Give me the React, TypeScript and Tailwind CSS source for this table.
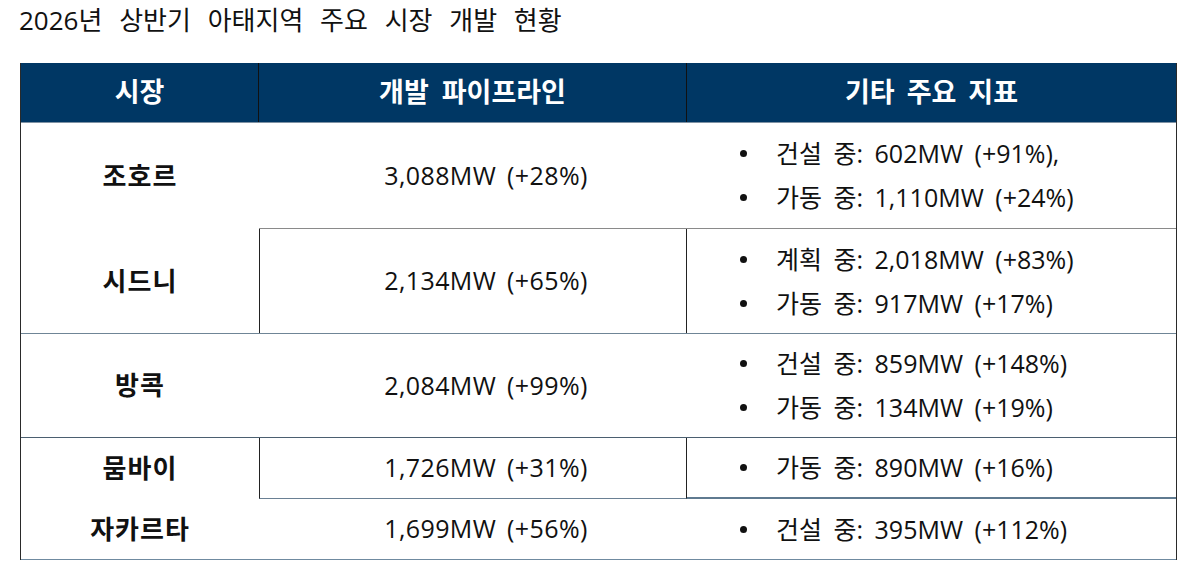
import React from "react";

const font = { fontFamily: '"Open Sans", "Noto Sans CJK KR", sans-serif' };

function Bullets({ items }: { items: string[] }) {
  return (
    <div className="flex flex-col gap-[10px] pl-[53px]">
      {items.map((t) => (
        <div key={t} className="flex items-center h-[34px]">
          <span className="w-[7px] h-[7px] rounded-full bg-[#111] mr-[29px] shrink-0" />
          <span className="text-[25px] leading-none [word-spacing:5px]">{t}</span>
        </div>
      ))}
    </div>
  );
}

export default function App() {
  const name = "w-[238px] shrink-0 flex items-center justify-center font-bold text-[26px] [letter-spacing:1px]";
  const mid = "w-[428px] shrink-0 flex items-center justify-center text-[25px] pl-[26px] tracking-[0.4px] [word-spacing:4px]";
  const right = "flex-1 flex items-center";
  return (
    <div className="w-[1200px] h-[578px] bg-white text-[#111]" style={font}>
      <div className="pl-[19px] pt-[1px] h-[63px] text-[26px] [word-spacing:10px] leading-[38px]">
        2026년 상반기 아태지역 주요 시장 개발 현황
      </div>
      <div className="ml-[20px] w-[1157px] border-l border-r border-[#2a2a2a]">
        {/* header */}
        <div className="flex h-[60px] bg-[#003764] text-white text-[27px] font-semibold border-b border-[#7f92a4]">
          <div className="w-[238px] shrink-0 flex items-center justify-center border-r border-[#111]">시장</div>
          <div className="w-[428px] shrink-0 flex items-center justify-center border-r border-[#111] [word-spacing:6px]">개발 파이프라인</div>
          <div className="flex-1 flex items-center justify-center [word-spacing:5px]">기타 주요 지표</div>
        </div>
        {/* 조호르 */}
        <div className="flex h-[106px]">
          <div className={name}>조호르</div>
          <div className={`${mid} border-b border-[#8a8a8a]`}>3,088MW (+28%)</div>
          <div className={`${right} border-b border-[#8a8a8a]`}>
            <Bullets items={["건설 중: 602MW (+91%),", "가동 중: 1,110MW (+24%)"]} />
          </div>
        </div>
        {/* 시드니 */}
        <div className="flex h-[105px] border-b border-[#6f8596]">
          <div className={name}>시드니</div>
          <div className={`${mid} border-l border-r border-[#222]`}>2,134MW (+65%)</div>
          <div className={right}>
            <Bullets items={["계획 중: 2,018MW (+83%)", "가동 중: 917MW (+17%)"]} />
          </div>
        </div>
        {/* 방콕 */}
        <div className="flex h-[104px] border-b border-[#4b5f70]">
          <div className={name}>방콕</div>
          <div className={mid}>2,084MW (+99%)</div>
          <div className={right}>
            <Bullets items={["건설 중: 859MW (+148%)", "가동 중: 134MW (+19%)"]} />
          </div>
        </div>
        {/* 뭄바이 */}
        <div className="flex h-[61px]">
          <div className={name}>뭄바이</div>
          <div className={`${mid} border-l border-r border-b border-[#222] border-b-[#6a8094]`}>1,726MW (+31%)</div>
          <div className={`${right} border-b-2 border-[#5f7a90]`}>
            <Bullets items={["가동 중: 890MW (+16%)"]} />
          </div>
        </div>
        {/* 자카르타 */}
        <div className="flex h-[61px] border-b border-[#6f8aa0]">
          <div className={name}>자카르타</div>
          <div className={mid}>1,699MW (+56%)</div>
          <div className={right}>
            <Bullets items={["건설 중: 395MW (+112%)"]} />
          </div>
        </div>
      </div>
    </div>
  );
}
